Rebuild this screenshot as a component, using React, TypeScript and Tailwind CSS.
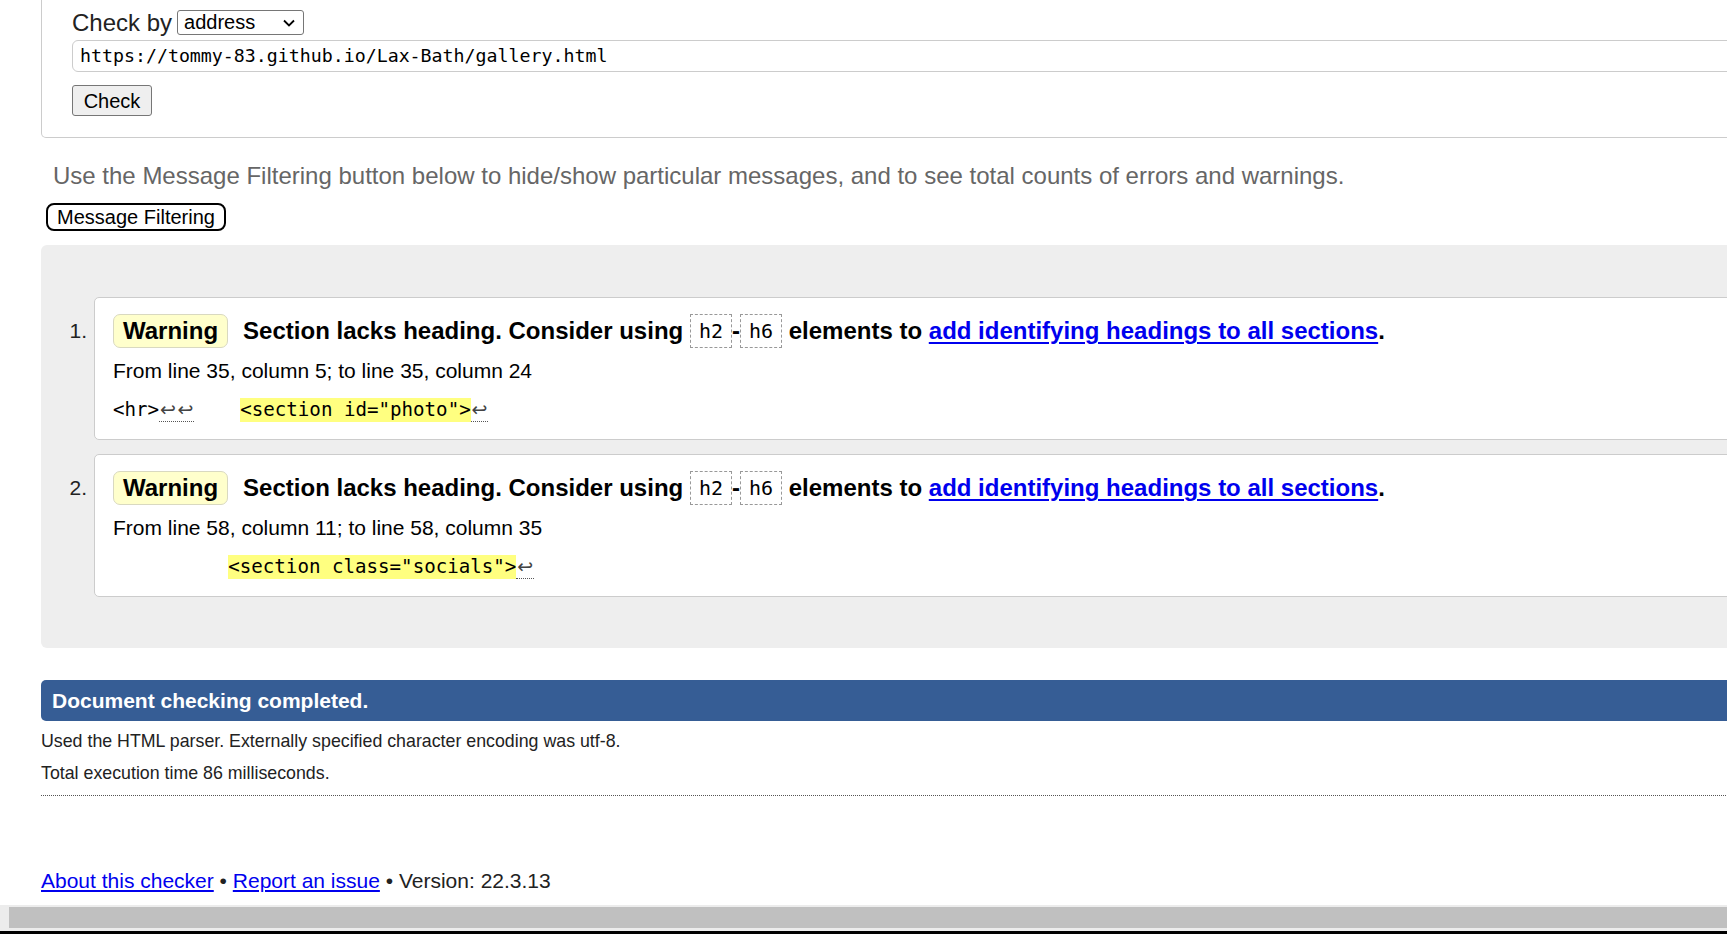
import React from "react";

const mono = "font-['DejaVu_Sans_Mono','Liberation_Mono',monospace]";

function Arrows({ count }: { count: number }) {
  return (
    <span className="inline-flex border-b border-dotted border-[#555]">
      {Array.from({ length: count }).map((_, i) => (
        <span
          key={i}
          className="inline-block w-[17.5px] overflow-hidden text-center font-['DejaVu_Sans',sans-serif] text-[19px] leading-[23px] text-[#444]"
        >
          ↩
        </span>
      ))}
    </span>
  );
}

function CodeBox({ children }: { children: React.ReactNode }) {
  return (
    <span
      className={`inline-flex h-[34px] items-center border border-dashed border-[#999] px-[8px] align-middle font-normal text-[20px] text-black ${mono}`}
    >
      {children}
    </span>
  );
}

function Item({
  num,
  from,
  code,
}: {
  num: string;
  from: string;
  code: React.ReactNode;
}) {
  return (
    <div className="flex">
      <div className="mt-[17px] h-[34px] w-[53px] pr-[7px] text-right text-[21px] leading-[34px] text-[#222]">
        {num}
      </div>
      <div className="flex-1 rounded-[5px] border border-[#ccc] bg-white pl-[18px] pt-[16px] pb-[16px]">
        <div className="flex items-center">
          <span className="inline-flex h-[34px] items-center rounded-[7px] border border-[#d9d9c0] bg-[#ffffcc] px-[9px] text-[24px] font-bold text-black">
            Warning
          </span>
          <span className="ml-[15px] flex items-center whitespace-pre text-[24px] font-bold leading-[34px] text-black">
            <span>Section lacks heading. Consider using </span>
            <CodeBox>h2</CodeBox>
            <span>-</span>
            <CodeBox>h6</CodeBox>
            <span> elements to </span>
            <a href="#" className="text-[#0000ee] underline decoration-[2px] underline-offset-[3px]">
              add identifying headings to all sections
            </a>
            <span>.</span>
          </span>
        </div>
        <div className="mt-[11px] text-[21px] leading-[24px] text-black">{from}</div>
        <div className={`mt-[14px] flex h-[26px] items-center whitespace-pre text-[19.15px] text-black ${mono}`}>
          {code}
        </div>
      </div>
    </div>
  );
}

function Hl({ children }: { children: React.ReactNode }) {
  return <span className="inline-block h-[24px] bg-[#ffff80] leading-[24px]">{children}</span>;
}

export default function App() {
  return (
    <div className="flex h-[934px] w-full flex-col overflow-hidden bg-white font-['Liberation_Sans',Arial,sans-serif] text-[#222]">
      <div className="h-[905px] w-[2000px] shrink-0 overflow-hidden">
        {/* Form fieldset */}
        <div className="ml-[41px] h-[138px] rounded-b-[5px] border-x border-b border-[#ccc] pl-[30px] pt-[10px]">
          <div className="flex h-[25px] items-center">
            <span className="text-[24px] leading-[25px] text-[#222]">Check by</span>
            <div className="ml-[5px] flex h-[25px] w-[127px] items-center justify-between rounded-[3px] border border-[#767676] bg-white pl-[6px] pr-[8px] text-[20px] leading-[23px] text-black">
              <span>address</span>
              <svg width="12" height="8" viewBox="0 0 12 8" fill="none">
                <path d="M1 1.5 L6 6.5 L11 1.5" stroke="#000" strokeWidth="1.8" />
              </svg>
            </div>
          </div>
          <div
            className={`mt-[5px] flex h-[32px] w-[1900px] items-center rounded-[6px] border border-[#ccc] pl-[7px] text-[18.26px] text-black ${mono}`}
          >
            https://tommy-83.github.io/Lax-Bath/gallery.html
          </div>
          <div className="mt-[13px]">
            <button className="h-[31px] w-[80px] rounded-[3px] border border-[#767676] bg-[#efefef] text-[20px] text-black">
              Check
            </button>
          </div>
        </div>

        <p className="ml-[53px] mt-[24px] text-[24px] leading-[28px] text-[#666]">
          Use the Message Filtering button below to hide/show particular messages, and to see total counts of errors and warnings.
        </p>
        <div className="ml-[46px] mt-[13px]">
          <button className="h-[28px] w-[180px] rounded-[8px] border-2 border-black bg-white text-[20px] leading-[24px] text-black">
            Message Filtering
          </button>
        </div>

        {/* Messages */}
        <div className="ml-[41px] mt-[14px] flex flex-col gap-[14px] rounded-l-[6px] bg-[#eee] pt-[52px] pb-[51px]">
          <Item
            num="1."
            from="From line 35, column 5; to line 35, column 24"
            code={
              <>
                <span>{"<hr>"}</span>
                <Arrows count={2} />
                <span>{"    "}</span>
                <Hl>{'<section id="photo">'}</Hl>
                <Arrows count={1} />
              </>
            }
          />
          <Item
            num="2."
            from="From line 58, column 11; to line 58, column 35"
            code={
              <>
                <span>{"          "}</span>
                <Hl>{'<section class="socials">'}</Hl>
                <Arrows count={1} />
              </>
            }
          />
        </div>

        <div className="ml-[41px] mt-[32px] h-[41px] rounded-l-[5px] bg-[#365d95] pl-[11px] text-[21px] font-bold leading-[41px] text-white">
          Document checking completed.
        </div>
        <p className="ml-[41px] mt-[8px] text-[17.8px] leading-[24px] text-[#222]">
          Used the HTML parser. Externally specified character encoding was utf-8.
        </p>
        <p className="ml-[41px] mt-[8px] text-[17.8px] leading-[24px] text-[#222]">
          Total execution time 86 milliseconds.
        </p>
        <div className="ml-[41px] mt-[10px] border-t border-dotted border-[#555]" />

        <div className="ml-[41px] mt-[73px] text-[21px] leading-[24px] text-[#222]">
          <a href="#" className="text-[#0000ee] underline">About this checker</a>
          <span> • </span>
          <a href="#" className="text-[#0000ee] underline">Report an issue</a>
          <span> • Version: 22.3.13</span>
        </div>
      </div>

      {/* horizontal scrollbar */}
      <div className="h-[26px] shrink-0 bg-[#ececec] pl-[9px] pt-[2px]">
        <div className="h-[21px] w-full bg-[#c0c0c0]" />
      </div>
      <div className="h-[3px] shrink-0 bg-black" />
    </div>
  );
}
